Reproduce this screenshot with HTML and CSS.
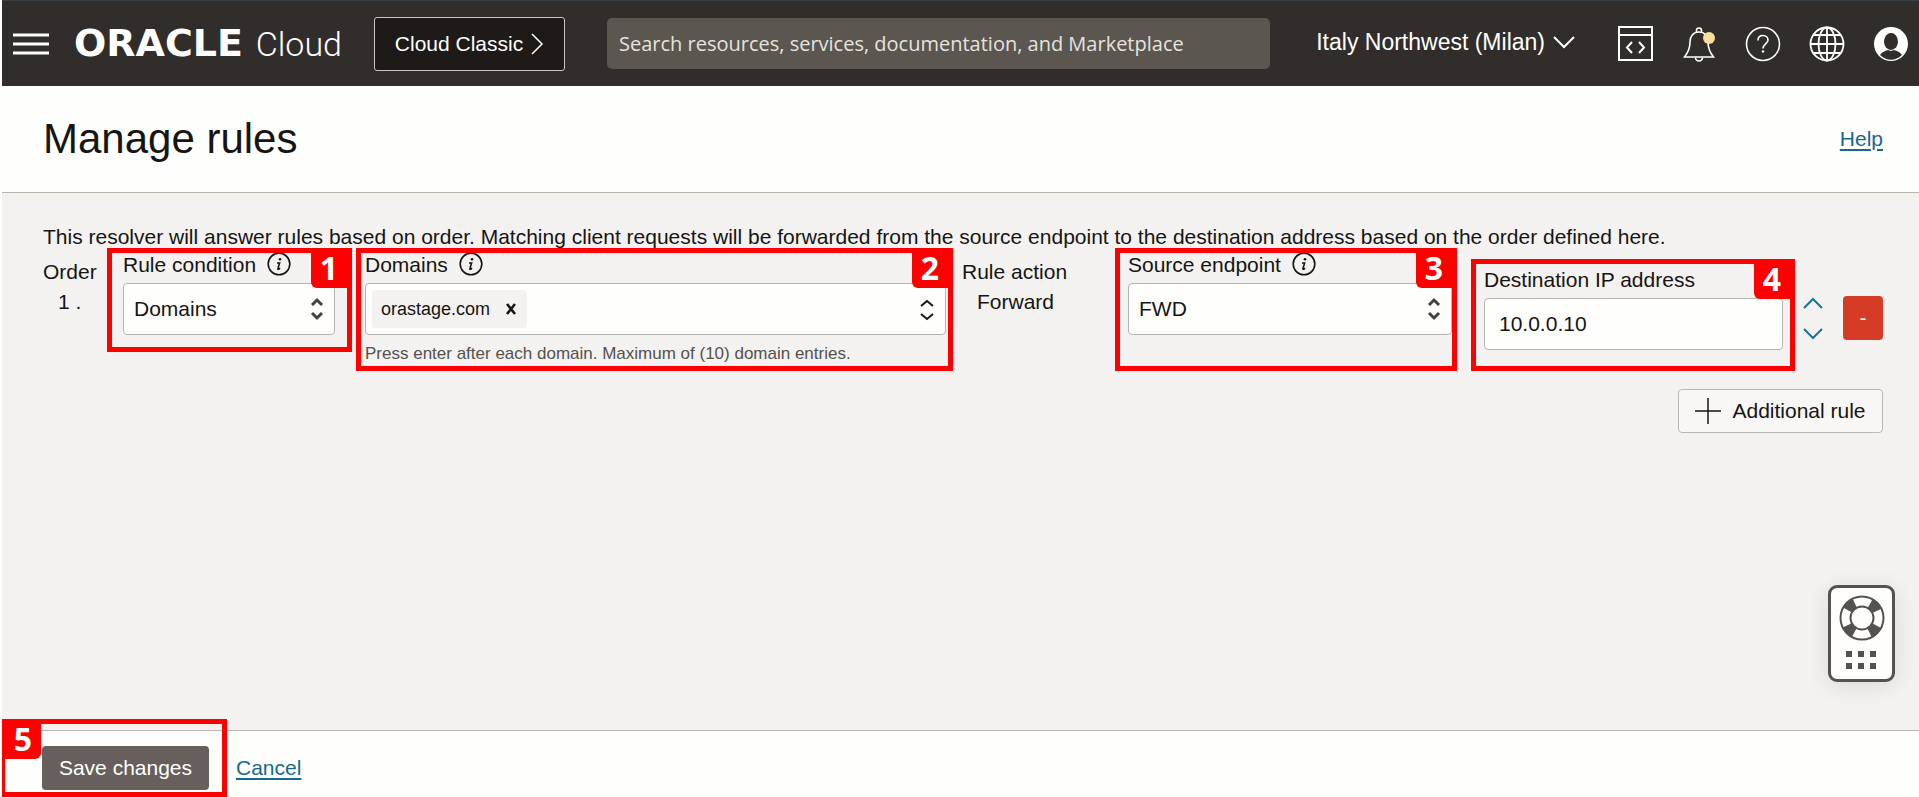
FILE: index.html
```html
<!DOCTYPE html>
<html lang="en">
<head>
    <meta charset="UTF-8">
    <meta name="viewport" content="width=device-width, initial-scale=1.0">
    <title>Manage rules</title>
    <link rel="stylesheet" href="styles.css">
</head>
<body>
    <header class="topbar">
        <button class="icon-button menu" aria-label="Menu">
            <svg width="36" height="22" viewBox="0 0 36 22"><path d="M0 2h36M0 11h36M0 20h36" stroke="#fff" stroke-width="3"/></svg>
        </button>
        <a class="brand" href="#"><span class="brand-name">ORACLE</span><span class="brand-product">Cloud</span></a>
        <button class="classic">
            Cloud Classic
            <svg width="13" height="24" viewBox="0 0 13 24"><path d="M1 2l10 10L1 22" fill="none" stroke="#fff" stroke-width="1.500"/></svg>
        </button>
        <input class="search" type="search" aria-label="Search" placeholder="Search resources, services, documentation, and Marketplace">
        <button class="region">
            Italy Northwest (Milan)
            <svg width="22" height="14" viewBox="0 0 22 14"><path d="M1 2l10 10L21 2" fill="none" stroke="#fff" stroke-width="2"/></svg>
        </button>
        <nav class="tools">
            <button class="icon-button" aria-label="Developer tools">
                <svg width="36" height="36" viewBox="0 0 36 36" fill="none" stroke="#fff" stroke-width="2">
                    <path d="M2 1h33v33H2zM2 9h33"/>
                    <path d="M15 16l-5 5.500 5 5.500M22 16l5 5.500-5 5.500"/>
                </svg>
            </button>
            <button class="icon-button" aria-label="Announcements">
                <svg width="36" height="36" viewBox="0 0 36 36" fill="none" stroke="#fff" stroke-width="1.600">
                    <path d="M15.500 6V4.500a2.500 2.500 0 0 1 5 0V6"/>
                    <path d="M3.500 31c4-5 5.500-9 5.500-15 0-6 3.500-10 9-10s9 4 9 10c0 6 1.500 10 5.500 15z"/>
                    <path d="M14.500 31.500a3.500 3.500 0 0 0 7 0"/>
                    <circle cx="28" cy="12" r="6" fill="#fadf9b" stroke="none"/>
                </svg>
            </button>
            <button class="icon-button" aria-label="Help menu">
                <svg width="36" height="36" viewBox="0 0 36 36" fill="none" stroke="#fff" stroke-width="1.600">
                    <circle cx="18" cy="18" r="16.500"/>
                    <path d="M13 14.500c0-3 2-5 5-5s5 2 5 4.500c0 4-5 4-5 8.500"/>
                    <circle cx="18" cy="25.500" r="1.200" fill="#fff" stroke="none"/>
                </svg>
            </button>
            <button class="icon-button" aria-label="Language">
                <svg width="36" height="36" viewBox="0 0 36 36" fill="none" stroke="#fff" stroke-width="1.800">
                    <circle cx="18" cy="18" r="16.500"/>
                    <ellipse cx="18" cy="18" rx="8.500" ry="16.500"/>
                    <path d="M18 1.500v33M1.500 18h33M4.500 9h27M4.500 27h27"/>
                </svg>
            </button>
            <button class="icon-button" aria-label="Profile">
                <svg width="36" height="36" viewBox="0 0 36 36">
                    <circle cx="18" cy="18" r="17" fill="#fff"/>
                    <ellipse cx="18" cy="15.500" rx="7" ry="8.500" fill="#312d2a"/>
                    <path d="M7 29c2-3 5-4 8-5l3 1 3-1c3 1 6 2 8 5-3 3-7 4.800-11 4.800S10 32 7 29z" fill="#312d2a"/>
                </svg>
            </button>
        </nav>
    </header>

    <div class="title-bar">
        <h1>Manage rules</h1>
        <a href="#">Help</a>
    </div>

    <main>
        <p class="intro">This resolver will answer rules based on order. Matching client requests will be forwarded from the source endpoint to the destination address based on the order defined here.</p>

        <form id="rules">
            <div class="rule">
                <div class="static order">
                    <div>Order</div>
                    <div class="static-value">1 .</div>
                </div>

                <div class="field marked condition">
                    <div class="label">
                        <label for="condition">Rule condition</label>
                        <svg class="info" width="24" height="24" viewBox="0 0 24 24"><circle cx="12" cy="11" r="10.800"/><circle class="ink" cx="13" cy="6.300" r="1.300"/><path d="M10 10h2.600l-1.700 5.600q-.2 1 .8.600l1.400-1"/></svg>
                    </div>
                    <div class="picker">
                        <select id="condition"><option>Domains</option></select>
                        <svg class="updown" width="14" height="24" viewBox="0 0 14 24"><path d="M2 8l5-5 5 5M2 16l5 5 5-5"/></svg>
                    </div>
                    <span class="badge">1</span>
                </div>

                <div class="field marked domains">
                    <div class="label">
                        <label for="domains">Domains</label>
                        <svg class="info" width="24" height="24" viewBox="0 0 24 24"><circle cx="12" cy="11" r="10.800"/><circle class="ink" cx="13" cy="6.300" r="1.300"/><path d="M10 10h2.600l-1.700 5.600q-.2 1 .8.600l1.400-1"/></svg>
                    </div>
                    <div class="picker chips">
                        <span class="chip">
                            orastage.com
                            <button type="button" aria-label="Remove orastage.com">
                                <svg width="12" height="12" viewBox="0 0 12 12"><path d="M2 1l8 10M10 1L2 11" stroke="#161513" stroke-width="2.600"/></svg>
                            </button>
                        </span>
                        <input id="domains" type="text">
                        <svg class="updown dark" width="14" height="24" viewBox="0 0 14 24"><path d="M1 8l6-5 6 5M1 16l6 5 6-5"/></svg>
                    </div>
                    <p class="hint">Press enter after each domain. Maximum of (10) domain entries.</p>
                    <span class="badge">2</span>
                </div>

                <div class="static action">
                    <div>Rule action</div>
                    <div class="static-value">Forward</div>
                </div>

                <div class="field marked source">
                    <div class="label">
                        <label for="source">Source endpoint</label>
                        <svg class="info" width="24" height="24" viewBox="0 0 24 24"><circle cx="12" cy="11" r="10.800"/><circle class="ink" cx="13" cy="6.300" r="1.300"/><path d="M10 10h2.600l-1.700 5.600q-.2 1 .8.600l1.400-1"/></svg>
                    </div>
                    <div class="picker">
                        <select id="source"><option>FWD</option></select>
                        <svg class="updown" width="14" height="24" viewBox="0 0 14 24"><path d="M2 8l5-5 5 5M2 16l5 5 5-5"/></svg>
                    </div>
                    <span class="badge">3</span>
                </div>

                <div class="field marked destination">
                    <div class="label"><label for="destination">Destination IP address</label></div>
                    <input id="destination" type="text" value="10.0.0.10">
                    <span class="badge">4</span>
                </div>

                <div class="move">
                    <button type="button" aria-label="Move up"><svg width="20" height="12" viewBox="0 0 20 12"><path d="M1 11l9-9 9 9"/></svg></button>
                    <button type="button" aria-label="Move down"><svg width="20" height="12" viewBox="0 0 20 12"><path d="M1 1l9 9 9-9"/></svg></button>
                </div>
                <button type="button" class="remove" aria-label="Remove rule">-</button>
            </div>

            <button type="button" class="add">
                <svg width="26" height="26" viewBox="0 0 26 26"><path d="M13 0v26M0 13h26" stroke="#161513" stroke-width="1.500"/></svg>
                Additional rule
            </button>
        </form>
    </main>

    <footer>
        <div class="save-wrap">
            <button class="save" type="submit" form="rules">Save changes</button>
            <div class="save-mark"><span class="badge left">5</span></div>
        </div>
        <a href="#">Cancel</a>
    </footer>

    <!-- Floating support widget -->
    <button class="support" aria-label="Support">
        <svg width="46" height="78" viewBox="0 0 46 78">
            <circle cx="23" cy="23" r="16.500" fill="none" stroke="#55514c" stroke-width="10" stroke-dasharray="10 15.918" stroke-dashoffset="-7.959"/>
            <g fill="none" stroke="#55514c" stroke-width="2">
                <circle cx="23" cy="23" r="21.500"/>
                <circle cx="23" cy="23" r="11.500"/>
            </g>
            <path fill="#55514c" d="M7 56h6v6H7zM19 56h6v6h-6zM31 56h6v6h-6zM7 68h6v6H7zM19 68h6v6h-6zM31 68h6v6h-6z"/>
        </svg>
    </button>
</body>
</html>
```

FILE: styles.css
```css
* {
    box-sizing: border-box;
}
body {
    display: flex;
    flex-direction: column;
    min-height: 100vh;
    margin: 0;
    border-left: 2px solid #fff;
    background-color: #f3f2f0;
    color: #161513;
    font-family: "Liberation Sans", Arial, sans-serif;
    font-size: 21px;
    line-height: 24px;
}
button, input, select {
    font: inherit;
    color: inherit;
}
button {
    padding: 0;
    border: none;
    background: none;
    cursor: pointer;
}
svg {
    display: block;
    flex: none;
}
a {
    color: #17698c;
    text-decoration-thickness: 2px;
    text-underline-offset: 3px;
}

/* Top bar */
.topbar {
    display: flex;
    align-items: center;
    height: 86px;
    padding: 0 10px 0 11px;
    border-top: 1px solid #3a3d3f;
    background-color: #312d2a;
    color: #fff;
}
.brand {
    display: flex;
    align-items: baseline;
    width: 270px;
    margin-left: 23px;
    color: #fff;
    text-decoration: none;
    line-height: 40px;
}
.brand-name {
    width: 186px;
    padding-left: 2px;
    font-family: "DejaVu Sans", sans-serif;
    font-size: 38px;
    font-weight: bold;
}
.brand-product {
    font-family: Roboto, sans-serif;
    font-size: 34px;
    font-weight: 300;
}
.classic {
    display: flex;
    align-items: center;
    justify-content: center;
    gap: 8px;
    width: 191px;
    height: 54px;
    margin-left: 32px;
    border: 1px solid #c9c5c2;
    border-radius: 3px;
    background-color: #1e1a17;
}
.search {
    flex: 1;
    min-width: 0;
    height: 51px;
    margin: 0 46px 0 42px;
    padding: 0 12px;
    border: none;
    border-radius: 5px;
    background-color: #5b564f;
    font-family: "Open Sans", sans-serif;
    font-size: 20px;
}
.search::placeholder {
    color: #e6e3df;
    opacity: 1;
}
.region {
    display: flex;
    align-items: center;
    gap: 8px;
    padding-bottom: 4px;
    font-size: 23px;
}
.tools {
    display: flex;
    gap: 28px;
    margin-left: 42px;
}

/* Page title */
.title-bar {
    display: flex;
    align-items: center;
    justify-content: space-between;
    height: 107px;
    padding: 0 36px 0 41px;
    border-bottom: 1px solid #bbb4ac;
    background-color: #fefefc;
}
h1 {
    margin: 0;
    font-size: 42px;
    font-weight: normal;
    line-height: 48px;
}

/* Rules */
main {
    flex: 1;
    padding: 33px 36px 0 41px;
}
.intro {
    margin: 0;
    line-height: 22px;
}
.rule {
    display: flex;
    align-items: flex-start;
}
.static {
    padding-top: 9px;
    line-height: 30px;
}
.static-value {
    padding-left: 15px;
}
.order {
    width: 64px;
}
.action {
    width: 162px;
    padding-left: 9px;
}
.marked {
    position: relative;
    border: 5px solid #f00;
}
.badge {
    position: absolute;
    top: 0;
    right: 0;
    width: 36px;
    height: 35px;
    border-radius: 0 0 0 6px;
    background-color: #f00;
    color: #fff;
    font-family: "Open Sans", sans-serif;
    font-size: 32px;
    font-weight: bold;
    line-height: 30px;
    text-align: center;
}
.badge.left {
    right: auto;
    left: 0;
    border-radius: 0 0 6px 0;
}
.condition {
    width: 245px;
    margin-right: 4px;
    padding: 0 12px 12px 11px;
}
.domains {
    flex: 597 1 597px;
    padding: 0 2px 2px 4px;
}
.source {
    flex: 342 1 342px;
    align-self: stretch;
    padding-left: 8px;
}
.destination {
    width: 324px;
    align-self: stretch;
    margin: 11px 8px 0 14px;
    padding: 4px 7px 0 8px;
}
.label {
    display: flex;
    gap: 11px;
    margin-bottom: 6px;
}
.info {
    fill: none;
    stroke: #161513;
    stroke-width: 1.6;
}
.info .ink {
    fill: #161513;
    stroke: none;
}
.picker {
    position: relative;
}
.picker select,
.chips,
#destination {
    width: 100%;
    height: 52px;
    padding: 0 10px;
    border: 1px solid #b9b3ae;
    border-radius: 4px;
    background-color: #fefefc;
}
.picker select {
    display: block;
    appearance: none;
}
#destination {
    display: block;
    padding: 0 14px;
}
.updown {
    position: absolute;
    top: 14px;
    right: 11px;
    fill: none;
    stroke: #45413d;
    stroke-width: 3;
    pointer-events: none;
}
.updown.dark {
    stroke: #161513;
    stroke-width: 2;
}
.chips {
    display: flex;
    align-items: center;
    padding: 0 40px 0 6px;
}
.chips input {
    flex: 1;
    min-width: 0;
    border: none;
    outline: none;
    background: none;
}
.chip {
    display: flex;
    align-items: center;
    gap: 15px;
    height: 38px;
    padding: 0 10px 0 9px;
    border-radius: 3px;
    background-color: #f3f2f0;
    font-size: 18px;
}
.hint {
    margin: 9px 0 0;
    color: #55514c;
    font-size: 17px;
    line-height: 20px;
}
.move {
    display: flex;
    flex-direction: column;
    gap: 19px;
    margin: 49px 20px 0 0;
}
.move path {
    fill: none;
    stroke: #17749a;
    stroke-width: 2;
}
.remove {
    width: 40px;
    height: 44px;
    margin-top: 48px;
    border-radius: 4px;
    background-color: #d63b25;
    color: #fff;
}
.add {
    display: flex;
    align-items: center;
    justify-content: center;
    gap: 11px;
    width: 205px;
    height: 44px;
    margin: 18px 0 0 auto;
    border: 1px solid #bbb6b2;
    border-radius: 4px;
    background-color: #f8f7f6;
}

/* Footer */
footer {
    display: flex;
    align-items: center;
    gap: 27px;
    margin-top: 18px;
    padding: 15px 0 7px 40px;
    border-top: 1px solid #bbb6b2;
    background-color: #fefefc;
}
.save-wrap {
    position: relative;
}
.save {
    display: block;
    width: 167px;
    height: 44px;
    border-radius: 4px;
    background-color: #665f5b;
    color: #fff;
}
.save-mark {
    position: absolute;
    inset: -27px -18px -7px -42px;
    border: 5px solid #f00;
    pointer-events: none;
}

.support {
    position: fixed;
    right: 24px;
    bottom: 115px;
    display: flex;
    align-items: center;
    justify-content: center;
    width: 67px;
    height: 97px;
    border: 3px solid #55514c;
    border-radius: 9px;
    background-color: #fefefc;
    box-shadow: 0 4px 24px rgba(0, 0, 0, 0.1);
}
```
